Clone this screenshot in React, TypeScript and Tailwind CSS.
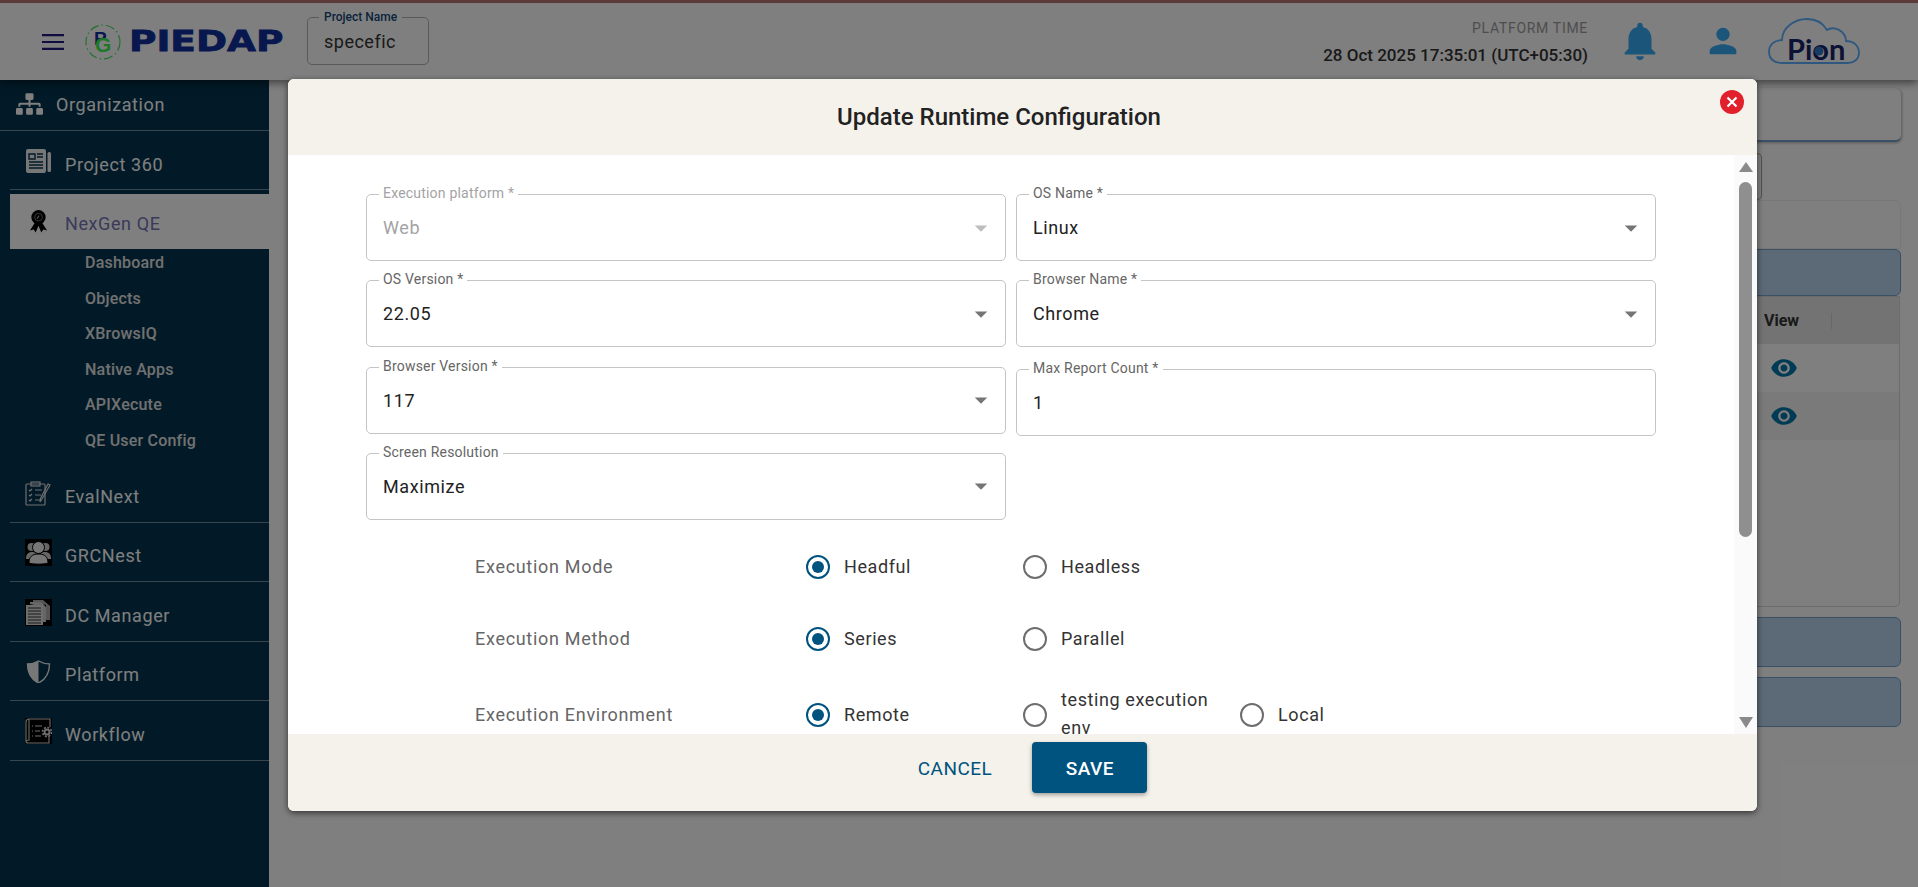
import React from "react";
import { FaSitemap } from "react-icons/fa";

const Caret = ({ disabled }: { disabled?: boolean }) => (
  <svg viewBox="0 0 24 24" className={`w-[30px] h-[30px] ${disabled ? "fill-[#bdbdbd]" : "fill-[#757575]"}`}>
    <path d="M7 10l5 5 5-5z" />
  </svg>
);

const Eye = () => (
  <svg viewBox="0 0 24 24" className="w-[28px] h-[28px] fill-[#0076ab]">
    <path d="M12 4.5C7 4.5 2.73 7.61 1 12c1.73 4.39 6 7.5 11 7.5s9.27-3.11 11-7.5c-1.73-4.39-6-7.5-11-7.5M12 17c-2.76 0-5-2.24-5-5s2.24-5 5-5 5 2.24 5 5-2.24 5-5 5m0-8c-1.66 0-3 1.34-3 3s1.34 3 3 3 3-1.34 3-3-1.34-3-3-3" />
  </svg>
);

const PaperIcon = () => (
  <svg viewBox="0 0 25 24" className="w-[25px] h-[24px]">
    <rect x="0" y="0" width="20" height="24" rx="2" fill="#eee" />
    <rect x="21.5" y="3" width="3.5" height="20" rx="1.5" fill="#eee" />
    <path d="M3 5h6v5H3zM3 13h14M3 16h14M3 19h14M11 5h6M11 8h6" stroke="#04344f" strokeWidth="1.4" fill="none" />
  </svg>
);

const AwardIcon = () => (
  <svg viewBox="0 0 20 24" className="w-[19px] h-[24px]">
    <path d="M6 14 L1 22 L5 21 L7 24 L10 17 L13 24 L15 21 L19 22 L14 14 Z" fill="#000" />
    <circle cx="10" cy="8" r="7.5" fill="#000" />
    <circle cx="10" cy="8" r="4" fill="none" stroke="#777" strokeWidth="1" />
    <path d="M8 9l2-3 1 1-2 3z" fill="#999" />
  </svg>
);

const ClipboardIcon = () => (
  <svg viewBox="0 0 27 25" className="w-[27px] h-[25px]" fill="none" stroke="#ddd" strokeWidth="1.2">
    <rect x="1" y="3" width="19" height="21" rx="1" />
    <rect x="6" y="1" width="9" height="4" />
    <path d="M4 9l1 1 2-2M4 14l1 1 2-2M4 19l1 1 2-2M10 9h7M10 14h6M10 19h5" />
    <path d="M25 4L17 18l-2 3 .5-3.5L23 3z" />
  </svg>
);

const PeopleIcon = () => (
  <svg viewBox="0 0 27 27" className="w-[27px] h-[27px] bg-black">
    <circle cx="6.5" cy="8" r="4" fill="#ccc" />
    <circle cx="20.5" cy="8" r="4" fill="#ccc" />
    <path d="M1 20c0-5 2-7 6-7s6 2 6 7zM14 20c0-5 2-7 6-7s6 2 6 7z" fill="#ccc" />
    <circle cx="13.5" cy="8.5" r="6" fill="#eee" stroke="#000" strokeWidth="1" />
    <path d="M4 24c0-6 3-9 9.5-9s9.5 3 9.5 9c-3 1.5-16 1.5-19 0z" fill="#eee" stroke="#000" strokeWidth="1" />
  </svg>
);

const DocsIcon = () => (
  <svg viewBox="0 0 27 27" className="w-[27px] h-[27px] bg-black">
    <path d="M8 1h10l7 6v14h-4V6L8 3z" fill="#aaa" />
    <path d="M5 3h11l5 5v15h-3V8L5 5z" fill="#ccc" />
    <rect x="1" y="6" width="17" height="20" fill="#ddd" />
    <path d="M3 9h13M3 12h13M3 15h13M3 18h13M3 21h13M3 24h13" stroke="#333" strokeWidth="1" />
  </svg>
);

const ShieldIcon = () => (
  <svg viewBox="0 0 25 24" className="w-[25px] h-[23px]">
    <path d="M12.5 1C9 3 5 4 1 4c0 9 3 16 11.5 20C21 20 24 13 24 4c-4 0-8-1-11.5-3z" fill="none" stroke="#eee" strokeWidth="1.4" />
    <path d="M12.5 1C9 3 5 4 1 4c0 9 3 16 11.5 20z" fill="#eee" />
  </svg>
);

const WorkflowIcon = () => (
  <svg viewBox="0 0 27 26" className="w-[27px] h-[26px] bg-black" fill="none" stroke="#ddd" strokeWidth="1.1">
    <path d="M4 1h21v8M4 1C2 1 1 2 1 4v19c0 1 1 2 2 2h21v-7" />
    <path d="M4 1v21c-1 0-2 .5-3 1" />
    <path d="M7 8h1M10 8h7M7 13h1M10 13h5M7 18h1M10 18h6" />
    <circle cx="22" cy="14" r="2.5" strokeWidth="2" />
    <circle cx="22" cy="14" r="4.5" strokeDasharray="2 1.5" strokeWidth="1.6" />
  </svg>
);

const SideItem = ({ icon, label, first }: { icon: React.ReactNode; label: string; first?: boolean }) => (
  <div className={`ml-[10px] pt-2 pl-[15px] flex items-center gap-[13px] border-b border-[#6f8a9a] ${first ? "h-[59px]" : "h-[59.5px]"}`}>
    <span className="w-[27px] flex justify-center -mt-[6px]">{icon}</span>
    <span className="text-[18px] tracking-[0.6px] text-white">{label}</span>
  </div>
);

const Sidebar = () => (
  <aside className="w-[269px] shrink-0 bg-[#04344f] shadow-[4px_0_8px_rgba(0,0,0,0.5)] flex flex-col">
    <div className="h-[51px] pl-4 flex items-center gap-[13px] border-b border-[#6f8a9a]">
      <FaSitemap className="w-[27px] h-[22px] text-white -mt-[2px]" />
      <span className="text-[18px] tracking-[0.6px] text-white -mt-[2px]">Organization</span>
    </div>
    <SideItem first icon={<PaperIcon />} label="Project 360" />
    <div className="ml-[10px] mt-1 h-[55px] pl-[15px] flex items-center gap-[13px] bg-white">
      <span className="w-[27px] flex justify-center -mt-[2px]"><AwardIcon /></span>
      <span className="text-[18px] tracking-[0.6px] text-[#7474b4] mt-[4px]">NexGen QE</span>
    </div>
    <div className="pl-[85px] pt-px flex flex-col gap-[9.6px] h-[214px] text-[16px] font-medium tracking-[0.2px] text-[#e2e2e2]">
      {["Dashboard", "Objects", "XBrowsIQ", "Native Apps", "APIXecute", "QE User Config"].map((s) => (
        <div key={s} className="h-[26px] leading-[26px]">{s}</div>
      ))}
    </div>
    <SideItem icon={<ClipboardIcon />} label="EvalNext" />
    <SideItem icon={<PeopleIcon />} label="GRCNest" />
    <SideItem icon={<DocsIcon />} label="DC Manager" />
    <SideItem icon={<ShieldIcon />} label="Platform" />
    <SideItem icon={<WorkflowIcon />} label="Workflow" />
  </aside>
);

const TopBar = () => (
  <header className="relative z-10 h-[80px] shrink-0 bg-white border-t-[3px] border-[#b87474] shadow-[0_3px_8px_rgba(0,0,0,0.5)] flex items-center pl-[42px] pr-[58px]">
    <svg viewBox="0 0 22 16" className="w-[22px] h-[16px] fill-[#201c80]">
      <path d="M0 0h22v2.2H0zM0 6.9h22v2.2H0zM0 13.8h22V16H0z" />
    </svg>
    <svg viewBox="0 0 38 36" className="ml-[20px] w-[38px] h-[36px] shrink-0">
      <circle cx="19" cy="18" r="17" fill="none" stroke="#45e060" strokeWidth="1.2" strokeDasharray="9 3 1.5 3" />
      <text x="10" y="21" fontFamily="Liberation Sans" fontWeight="700" fontSize="19" fill="#10309f">P</text>
      <text x="11" y="28" fontFamily="Liberation Sans" fontWeight="700" fontSize="21" fill="#3df04f">G</text>
    </svg>
    <div className="ml-[7px] w-[154px] font-['DejaVu_Sans'] font-bold text-[29px] leading-none text-[#10309f] [-webkit-text-stroke:0.8px_#10309f] scale-x-[1.29] origin-left">
      PIEDAP
    </div>
    <div className="relative ml-[24px] w-[122px] h-[48px] border border-[#b5b5b5] rounded-[5px] pl-[16px] flex items-center -mt-[2px]">
      <span className="absolute -top-[10px] left-[11px] px-[5px] bg-white text-[12px] font-medium text-[#144878] whitespace-nowrap">Project Name</span>
      <span className="text-[18px] tracking-[0.5px] text-[#333] mt-[1px]">specefic</span>
    </div>
    <div className="ml-auto flex flex-col items-end -mt-[1px]">
      <span className="text-[14px] tracking-[0.7px] text-[#9c9c9c] leading-[20px]">PLATFORM TIME</span>
      <span className="mt-[7px] text-[17px] font-medium text-[#333] leading-[20px]">28 Oct 2025 17:35:01 (UTC+05:30)</span>
    </div>
    <svg viewBox="0 0 24 24" className="ml-[29px] w-[46px] h-[46px] fill-[#36acf5] -mt-[1px]">
      <path d="M12 22c1.1 0 2-.9 2-2h-4c0 1.1.89 2 2 2m6-6v-5c0-3.07-1.64-5.64-4.5-6.32V4c0-.83-.67-1.5-1.5-1.5s-1.5.67-1.5 1.5v.68C7.63 5.36 6 7.92 6 11v5l-2 2v1h16v-1z" />
    </svg>
    <svg viewBox="0 0 24 24" className="ml-[40px] w-[40px] h-[40px] fill-[#36acf5] -mt-[1px]">
      <path d="M12 12c2.21 0 4-1.79 4-4s-1.79-4-4-4-4 1.79-4 4 1.79 4 4 4m-8 8v-2c0-2.66 5.33-4 8-4s8 1.34 8 4v2z" />
    </svg>
    <svg viewBox="0 0 92 46" className="ml-[25px] w-[92px] h-[46px] -mt-[1px]">
      <path d="M14 45C5 45 1 40 1 34 1 27 6 22 14 22 14 10 26 1 39 1 48 1 55 5 59 12 63 9 70 10 74 14 77 17 78 20 78 23 86 23 91 28 91 35 91 41 86 45 80 45Z" fill="none" stroke="#5cb0ff" strokeWidth="1.8" />
      <text x="19" y="42" fontFamily="Lato" fontWeight="700" fontSize="29" fill="#18246a">Pion</text>
      <circle cx="51" cy="33" r="4.5" fill="#2d78c8" />
    </svg>
  </header>
);

const Behind = () => (
  <main className="flex-1 bg-white pl-[31px] pr-[17px] pt-[8px] flex flex-col">
    <div className="h-[54px] bg-white rounded-[6px] border-b-2 border-[#74a0c8] shadow-[1px_1px_3px_rgba(0,0,0,0.3)]" />
    <div className="mt-[11px] ml-auto mr-[139px] w-[20px] h-[47px] rounded-r-[5px] border border-[#a0a0a0] border-l-0" />
    <div className="h-[49px] rounded-t-[6px] border border-[#f0f0f0]" />
    <div className="h-[47px] bg-[#b8d4ee] border border-[#74a0c8] rounded-[6px]" />
    <div className="h-[311px] border border-[#d8d8d8] rounded-b-[5px] mr-[1px]">
      <div className="h-[47px] bg-[#e6e6e6] flex items-center pl-[1463px] text-[16px] font-bold text-[#333]">
        <span className="w-[67px]">View</span>
        <span className="w-px h-[16px] bg-[#cfcfcf]" />
      </div>
      <div className="h-[48px] flex items-center pl-[1469px]"><Eye /></div>
      <div className="h-[48px] bg-[#f4f4f4] flex items-center pl-[1469px]"><Eye /></div>
    </div>
    <div className="mt-[10px] h-[50px] bg-[#b8d4ee] border border-[#74a0c8] rounded-[6px]" />
    <div className="mt-[10px] h-[50px] bg-[#b8d4ee] border border-[#74a0c8] rounded-[6px]" />
  </main>
);

const Field = ({ label, value, disabled, select = true, className = "" }: { label: string; value: string; disabled?: boolean; select?: boolean; className?: string }) => (
  <div className={`relative h-[67px] border border-[#c4c4c4] rounded-[5px] pl-[16px] pr-[9px] flex items-center justify-between ${className}`}>
    <span className={`absolute -top-[12px] left-[12px] px-[4px] bg-white text-[14px] tracking-[0.2px] ${disabled ? "text-[#a3a3a3]" : "text-[#666]"}`}>{label}</span>
    <span className={`text-[18px] tracking-[0.6px] ${disabled ? "text-[#a3a3a3]" : "text-[#222]"}`}>{value}</span>
    {select && <Caret disabled={disabled} />}
  </div>
);

const Radio = ({ label, checked, wrap }: { label: string; checked?: boolean; wrap?: boolean }) => (
  <div className="w-[217px] flex items-center gap-[13px]">
    <span className={`w-[24px] h-[24px] shrink-0 rounded-full border-2 flex items-center justify-center ${checked ? "border-[#00527f]" : "border-[#6e6e6e]"}`}>
      {checked && <span className="w-[12px] h-[12px] rounded-full bg-[#00527f]" />}
    </span>
    <span className={`text-[18px] leading-[28px] tracking-[0.6px] text-[#333] ml-px ${wrap ? "w-[155px] -mt-px" : ""}`}>{label}</span>
  </div>
);

const RadioRow = ({ label, className, children }: { label: string; className: string; children: React.ReactNode }) => (
  <div className={`flex items-center ${className}`}>
    <span className="w-[331px] text-[18px] tracking-[0.7px] text-[#666]">{label}</span>
    {children}
  </div>
);

const Modal = () => (
  <div className="w-[1469px] h-[732px] bg-white rounded-[6px] overflow-hidden flex flex-col shadow-[0_2px_6px_rgba(0,0,0,0.6)]">
    <div className="relative h-[76px] shrink-0 bg-[#f5f2ec] flex items-center justify-center pr-[47px]">
      <h2 className="text-[24px] font-medium text-[#222]">Update Runtime Configuration</h2>
      <span className="absolute right-[13px] top-[11px] w-[24px] h-[24px] rounded-full bg-[#e2202c] flex items-center justify-center">
        <svg viewBox="0 0 12 12" className="w-[12px] h-[12px]" stroke="#fff" strokeWidth="2.2"><path d="M1.5 1.5l9 9M10.5 1.5l-9 9" /></svg>
      </span>
    </div>
    <div className="flex-1 flex min-h-0">
      <div className="flex-1 overflow-hidden pl-[78px] pt-[39px]">
        <div className="grid grid-cols-[640px_640px] gap-x-[10px] gap-y-[19.3px]">
          <Field label="Execution platform *" value="Web" disabled />
          <Field label="OS Name *" value="Linux" />
          <Field label="OS Version *" value="22.05" />
          <Field label="Browser Name *" value="Chrome" />
          <Field label="Browser Version *" value="117" />
          <Field label="Max Report Count *" value="1" select={false} className="mt-[2px] -mb-[2px]" />
          <Field label="Screen Resolution" value="Maximize" />
        </div>
        <div className="ml-[109px] mt-[25px] flex flex-col gap-[27px]">
          <RadioRow label="Execution Mode" className="h-[44px]">
            <Radio label="Headful" checked />
            <Radio label="Headless" />
          </RadioRow>
          <RadioRow label="Execution Method" className="h-[46px]">
            <Radio label="Series" checked />
            <Radio label="Parallel" />
          </RadioRow>
          <RadioRow label="Execution Environment" className="h-[52px]">
            <Radio label="Remote" checked />
            <Radio label="testing execution env" wrap />
            <Radio label="Local" />
          </RadioRow>
        </div>
      </div>
      <div className="w-[23px] shrink-0 bg-[#fafafa] flex flex-col items-center pt-[7px] pb-[6px]">
        <span className="w-0 h-0 border-x-[7.5px] border-x-transparent border-b-[10px] border-b-[#8a8a8a]" />
        <span className="mt-[10px] h-[355px] w-[13px] rounded-full bg-[#8f8f8f]" />
        <span className="mt-auto w-0 h-0 border-x-[7.5px] border-x-transparent border-t-[11px] border-t-[#8a8a8a]" />
      </div>
    </div>
    <div className="h-[77px] shrink-0 bg-[#f5f2ec] flex items-start justify-center gap-[40px] pl-[20px] pt-[8px]">
      <button className="h-[51px] pt-[4px] text-[19px] tracking-[0.5px] text-[#00527f]">CANCEL</button>
      <button className="w-[115px] h-[51px] pt-[4px] rounded-[4px] bg-[#00527f] text-white text-[19px] font-medium tracking-[0.5px] shadow-[0_2px_4px_rgba(0,0,0,0.35)]">SAVE</button>
    </div>
  </div>
);

export default function App() {
  return (
    <div className="relative w-[1918px] h-[887px] overflow-hidden flex flex-col font-['Roboto',sans-serif]">
      <TopBar />
      <div className="flex-1 flex min-h-0">
        <Sidebar />
        <Behind />
      </div>
      <div className="absolute inset-0 z-20 bg-black/50 pl-[288px] pt-[79px]">
        <Modal />
      </div>
    </div>
  );
}
